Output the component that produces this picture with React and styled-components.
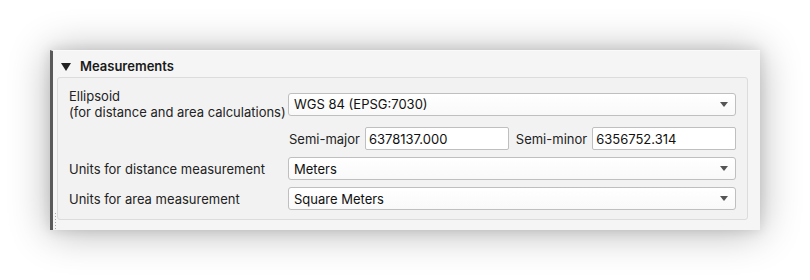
import React from 'react';
import styled, { createGlobalStyle } from 'styled-components';

const Global = createGlobalStyle`
  body {
    margin: 0;
    background: #ffffff;
    font-family: Inter, "Liberation Sans", Arial, sans-serif;
    font-size: 13px;
    color: #1e1e1e;
  }
`;

const Page = styled.div`
  width: 810px;
  height: 280px;
  padding: 50px 0 0 50px;
  box-sizing: border-box;
`;

const Panel = styled.div`
  position: relative;
  width: 710px;
  height: 180px;
  box-sizing: border-box;
  background: #f5f5f5;
  border-left: 3px solid #5a5a5a;
  border-top: 1px solid #fafafa;
  box-shadow: 0 2px 38px rgba(0, 0, 0, 0.3), 0 0 12px rgba(0, 0, 0, 0.12);
  display: flex;
  flex-direction: column;
  padding: 0 12px 0 4px;
`;

const Header = styled.div`
  height: 26px;
  display: flex;
  align-items: center;
  gap: 9px;
  padding: 4px 0 0 4px;
  box-sizing: border-box;
  font-weight: 600;
  font-size: 13px;
  color: #1a1a1a;
`;

const Triangle = styled.span`
  width: 0;
  height: 0;
  border-left: 5px solid transparent;
  border-right: 5px solid transparent;
  border-top: 8px solid #222;
  margin-top: 1px;
`;

const Group = styled.div`
  border: 1px solid #dcdcdc;
  border-radius: 3px;
  background: #f2f2f2;
  height: 143px;
  box-sizing: border-box;
  padding: 10px 11px 0 11px;
  display: grid;
  grid-template-columns: 219px 1fr;
  align-content: start;
  row-gap: 7px;
`;

const Label = styled.div`
  display: flex;
  align-items: center;
  line-height: 16px;
  color: #222;
`;

const Cell = styled.div`
  display: flex;
  align-items: center;
`;

const Combo = styled.div`
  flex: 1;
  height: 23px;
  box-sizing: border-box;
  border: 1px solid #bfbfbf;
  border-radius: 3px;
  background: linear-gradient(#ffffff, #f9f9f9);
  display: flex;
  align-items: center;
  justify-content: space-between;
  padding: 0 7px 0 5px;
  color: #111;
`;

const Arrow = styled.span`
  width: 0;
  height: 0;
  border-left: 4px solid transparent;
  border-right: 4px solid transparent;
  border-top: 5px solid #555;
`;

const AxisRow = styled.div`
  grid-column: 2;
  display: flex;
  align-items: center;
  height: 23px;
`;

const AxisLabel = styled.span`
  color: #222;
  white-space: nowrap;
  margin: 0 5px 0 ${({ $lead }) => ($lead ? '1px' : '7px')};
`;

const Field = styled.div`
  flex: 1;
  height: 23px;
  box-sizing: border-box;
  border: 1px solid #bfbfbf;
  border-radius: 2px;
  background: #fff;
  display: flex;
  align-items: center;
  padding: 0 3px;
  color: #111;
`;

const Grip = styled.div`
  position: absolute;
  left: 2px;
  bottom: 1px;
  width: 1px;
  height: 16px;
  background: repeating-linear-gradient(#aaa 0 1px, transparent 1px 3px);
`;

const Select = ({ value }) => (
  <Cell>
    <Combo>
      <span>{value}</span>
      <Arrow />
    </Combo>
  </Cell>
);

export default function App() {
  return (
    <Page>
      <Global />
      <Panel>
        <Header>
          <Triangle />
          Measurements
        </Header>
        <Group>
          <Label>
            Ellipsoid
            <br />
            (for distance and area calculations)
          </Label>
          <Select value="WGS 84 (EPSG:7030)" />
          <AxisRow>
            <AxisLabel $lead>Semi-major</AxisLabel>
            <Field>6378137.000</Field>
            <AxisLabel>Semi-minor</AxisLabel>
            <Field>6356752.314</Field>
          </AxisRow>
          <Label>Units for distance measurement</Label>
          <Select value="Meters" />
          <Label>Units for area measurement</Label>
          <Select value="Square Meters" />
        </Group>
        <Grip />
      </Panel>
    </Page>
  );
}
